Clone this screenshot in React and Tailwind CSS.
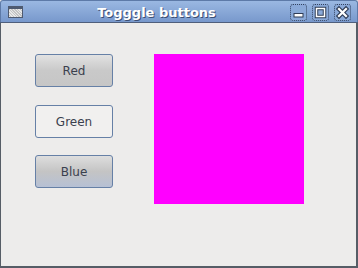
import React from "react";

function CtrlBtn({ children }) {
  return (
    <div className="w-[17px] h-[17px] rounded-[3px] border border-dotted border-[#33425f] bg-[#8aa9d8] flex items-center justify-center">
      <svg width="15" height="15" viewBox="0 0 15 15">{children}</svg>
    </div>
  );
}

export default function App() {
  const font = { fontFamily: '"DejaVu Sans", sans-serif' };
  return (
    <div className="w-[358px] h-[268px] flex flex-col bg-[#edeceb]" style={font}>
      <div className="h-[22px] shrink-0 flex items-center bg-gradient-to-b from-[#9ab8e2] to-[#7898cc] border-t border-x border-[#5d7aa8] rounded-t-[3px] relative">
        <div className="ml-[7px] w-[15px] h-[12px] border border-[#4e5a70] bg-[#dcdcdc] flex flex-col">
          <div className="h-[2px] bg-[#4e5a70]" />
          <div className="flex-1 bg-[repeating-linear-gradient(45deg,#e8e8e8_0,#e8e8e8_1px,#c4c4c4_1px,#c4c4c4_2px)]" />
        </div>
        <div className="flex-1 flex justify-center">
          <span
            className="text-[13px] font-bold text-white leading-none mt-[1px]"
            style={{ textShadow: "1px 1px 0 #3c4f73" }}
          >
            Togggle buttons
          </span>
        </div>
        <div className="flex gap-[5px] mr-[6px] mt-[1px]">
          <CtrlBtn>
            <rect x="3" y="8.5" width="9" height="3.5" fill="#fff" stroke="#2f3c55" strokeWidth="1" />
          </CtrlBtn>
          <CtrlBtn>
            <rect x="3.5" y="3.5" width="8" height="8" fill="none" stroke="#2f3c55" strokeWidth="3.5" />
            <rect x="3.5" y="3.5" width="8" height="8" fill="none" stroke="#fff" strokeWidth="1.5" />
          </CtrlBtn>
          <CtrlBtn>
            <path d="M4 4 L11 11 M11 4 L4 11" stroke="#2f3c55" strokeWidth="4.5" strokeLinecap="square" />
            <path d="M4 4 L11 11 M11 4 L4 11" stroke="#fff" strokeWidth="2.2" strokeLinecap="square" />
          </CtrlBtn>
        </div>
      </div>
      <div className="h-px bg-[#4f5f7c] shrink-0" />
      <div className="flex-1 flex border-l border-r-2 border-b-2 border-[#565d66]">
        <div className="flex flex-col ml-[34px] mt-[31px] w-[78px]">
          <button className="h-[33px] rounded-[3px] border border-[#6680a6] bg-gradient-to-b from-[#e2e2e2] via-[#c9c9c9] to-[#c6c6c6] text-[12px] text-[#3a404e] flex items-center justify-center">
            Red
          </button>
          <button className="h-[33px] mt-[18px] rounded-[3px] border border-[#6680a6] bg-[#f1f0ef] text-[12px] text-[#3a404e] flex items-center justify-center">
            Green
          </button>
          <button className="h-[33px] mt-[17px] rounded-[3px] border border-[#6680a6] bg-gradient-to-b from-[#dedede] via-[#c4c4c4] to-[#b6c0d4] text-[12px] text-[#3a404e] flex items-center justify-center">
            Blue
          </button>
        </div>
        <div className="ml-[41px] mt-[31px] w-[150px] h-[150px] bg-[#ff00ff]" />
      </div>
    </div>
  );
}
